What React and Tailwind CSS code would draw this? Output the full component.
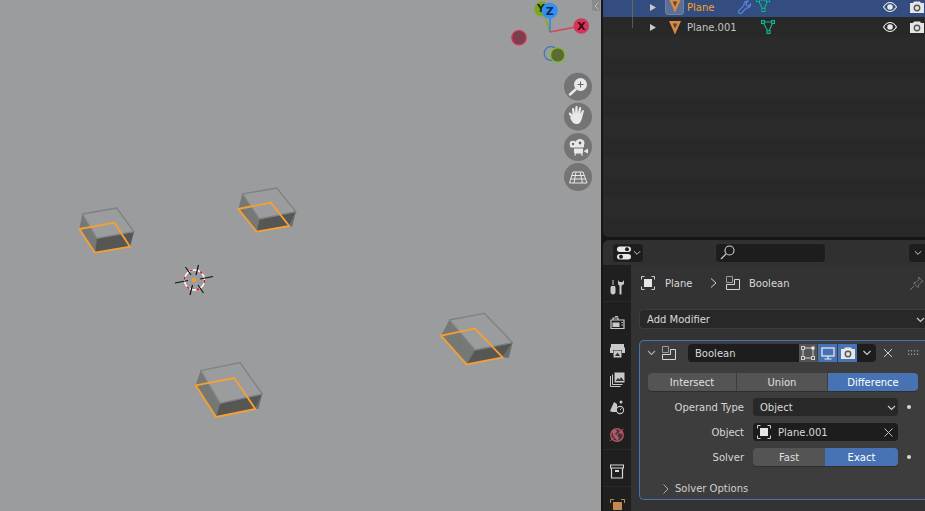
const BOXES = [
  { o: [60, 180], t: [[67,102],[170,84],[222,155],[110,175]], l: [[58,147],[163,128],[210,200],[105,218]] },
  { o: [60, 180], t: [[547,42],[650,24],[708,95],[598,117]], l: [[535,87],[632,68],[688,138],[590,155]] },
  { o: [180, 310], t: [[62,182],[180,158],[247,252],[120,280]], l: [[47,226],[163,204],[226,297],[108,321]] },
  { o: [180, 310], t: [[808,30],[913,10],[998,98],[885,120]], l: [[783,77],[885,56],[968,142],[860,163]] },
];
const pts = (a) => a.map((p) => p.join(",")).join(" ");

function Box({ o, t, l }) {
  return (
    <g transform={`translate(${o[0]} ${o[1]}) scale(0.3333)`} strokeLinejoin="round">
      <polygon points={pts([t[0], t[3], l[3], l[0]])} fill="#767876" />
      <polygon points={pts([t[3], t[2], l[2], l[3]])} fill="#565654" />
      <polygon points={pts([t[2], [t[2][0] - 12, t[2][1] + 45], l[2]])} fill="#6a6b6a" />
      <polygon points={pts(t)} fill="#9b9c9e" stroke="#808182" strokeWidth="4" />
      <line x1={t[3][0]} y1={t[3][1]} x2={l[3][0]} y2={l[3][1]} stroke="#6d6e6d" strokeWidth="2" />
      <polygon points={pts(l)} fill="none" stroke="#f5a035" strokeWidth="5.5" />
    </g>
  );
}

function Cursor() {
  return (
    <g>
      <circle cx="194.500" cy="280" r="10" fill="none" stroke="#fff" strokeWidth="1.400" />
      <circle cx="194.500" cy="280" r="10" fill="none" stroke="#e01010" strokeWidth="1.400" strokeDasharray="3 7.500" />
      <g stroke="#111" strokeWidth="1.100">
        <line x1="175" y1="283" x2="188" y2="280.500" />
        <line x1="200" y1="279" x2="213" y2="276.500" />
        <line x1="185.500" y1="267" x2="191" y2="275" />
        <line x1="198" y1="285" x2="203.500" y2="293" />
        <line x1="198.500" y1="265" x2="196" y2="275" />
        <line x1="192.500" y1="285" x2="190" y2="295" />
      </g>
      <circle cx="194" cy="280" r="2.300" fill="#f29b34" />
    </g>
  );
}

function Gizmo() {
  return (
    <g fontFamily="'DejaVu Sans', sans-serif" fontWeight="700" fontSize="11" textAnchor="middle">
      <line x1="550" y1="32" x2="543" y2="10" stroke="#7fae1c" strokeWidth="1.500" />
      <circle cx="541.700" cy="9" r="7.500" fill="#7aa81c" />
      <text x="541" y="12" fill="#1d2a08">Y</text>
      <line x1="550" y1="32" x2="581" y2="26" stroke="#d9405c" strokeWidth="1.500" />
      <line x1="550" y1="32" x2="550" y2="11" stroke="#2f80e0" strokeWidth="1.500" />
      <circle cx="549.700" cy="10.700" r="8" fill="#2f90f5" />
      <text x="549.700" y="14.700" fill="#0c2a50">Z</text>
      <circle cx="581.300" cy="26" r="7.800" fill="#d7345a" />
      <text x="581.300" y="30" fill="#3b0a18">X</text>
      <circle cx="519" cy="37.700" r="7.200" fill="#7b3e4c" stroke="#d7345a" strokeWidth="1.200" />
      <circle cx="551" cy="53.500" r="6.800" fill="#9b9c9e" stroke="#3d74b8" strokeWidth="1.200" />
      <circle cx="557.700" cy="55" r="7.200" fill="#5c6b36" stroke="#7fc01c" strokeWidth="1.300" />
    </g>
  );
}

function NavButtons() {
  return (
    <g>
      {[86.7, 116.7, 147, 177].map((y) => (
        <circle key={y} cx="578" cy={y} r="14" fill="#747474" />
      ))}
      <g>
        <circle cx="580.500" cy="84.500" r="6.500" fill="#e8e8e8" />
        <path d="M575.500 89.500L570 94.500" stroke="#e8e8e8" strokeWidth="2.500" strokeLinecap="round" />
        <path d="M577.500 84.500h6M580.500 81.500v6" stroke="#666" strokeWidth="1" />
      </g>
      <path d="M571 117c-1.500-2-3-3.500-2-4.300 1-.7 2.500 1 3.500 2.300l-.5-6c0-1.500 2-1.500 2.200 0l.8 4.500.4-6.500c.1-1.500 2.200-1.500 2.200 0l.2 6.300 1.300-5.500c.3-1.400 2.300-1 2.100.4l-1 6 1.800-3.500c.6-1.200 2.300-.6 1.800.7l-1.800 6.500c-.8 3.800-2.500 6.100-5.500 6.100-3 0-4.500-2-6.500-6.500z" fill="#e8e8e8" />
      <g fill="#e8e8e8">
        <circle cx="573" cy="144" r="3.300" />
        <ellipse cx="580" cy="143" rx="4.500" ry="4" />
        <rect x="570" y="144" width="14" height="3.500" rx="1" />
        <rect x="574" y="148.500" width="9" height="5" />
        <path d="M584 151l4-2.500v5l-4-2z" />
        <path d="M575 153.500h1.500l-1 2h-1zM580.500 153.500h1.500l1 2h-1.500z" />
      </g>
      <circle cx="573" cy="144" r="1.200" fill="#666" />
      <circle cx="580" cy="143" r="1.400" fill="#666" />
      <path d="M573 172h10l4 11h-17.500zM576 172l-2 11M580 172l2.500 11M571.800 175.500h12.400M570.500 179h15.500" fill="none" stroke="#e8e8e8" strokeWidth="1" />
    </g>
  );
}

const Chevron = ({ c = "#cfcfcf", w = 9 }) => (
  <svg width={w} height="6" viewBox="0 0 9 6"><path d="M1 1l3.500 3.500L8 1" fill="none" stroke={c} strokeWidth="1.100" /></svg>
);

const MeshData = () => (
  <svg width="16" height="16" viewBox="0 0 16 16" fill="none" stroke="#10b58f" strokeWidth="1.100">
    <path d="M3 3h10L8.500 13.500z" />
    <rect x="1.500" y="1.500" width="3" height="3" fill="#1f3f4f" />
    <rect x="11.500" y="1.500" width="3" height="3" fill="#1f3f4f" />
    <rect x="7" y="11.500" width="3" height="3" fill="#1f3f4f" />
  </svg>
);

const Tri = ({ c = "#d98b45" }) => (
  <svg width="14" height="15" viewBox="0 0 14 15"><path d="M1 1h12L7 14.500z" fill={c} /><path d="M4.800 3.500h4.400L7 8.500z" fill="#52463b" /></svg>
);

const Eye = () => (
  <svg width="14" height="12" viewBox="0 0 14 12"><path d="M.5 6C3 2 5 1.500 7 1.500S11 2 13.500 6C11 10 9 10.500 7 10.500S3 10 .5 6z" fill="none" stroke="#e8e8e8" strokeWidth="1.200" /><circle cx="7" cy="6" r="2.800" fill="#e8e8e8" /></svg>
);

const Cam = () => (
  <svg width="14" height="13" viewBox="0 0 14 13"><path d="M0 2h3l1-1.500h6L11 2h3v10H0z" fill="#e6e6e6" /><circle cx="7" cy="7" r="3.400" fill="#555" /><circle cx="7" cy="7" r="2" fill="#e6e6e6" /></svg>
);

const Arrow = () => (
  <svg width="6" height="7" viewBox="0 0 6 7"><path d="M0 0l6 3.500L0 7z" fill="#c9c9c9" /></svg>
);

function OutlinerRow({ selected, odd, children }) {
  return (
    <div className={`h-5 shrink-0 flex items-center relative ${selected ? "bg-[#334d80]" : odd ? "bg-[#2b2b2b]" : "bg-[#282828]"}`}>
      {children}
    </div>
  );
}

function Outliner() {
  return (
    <div className="h-[238px] -mt-px rounded-bl-md overflow-hidden bg-[#282828] flex flex-col shrink-0">
      <div className="-mt-[2px] flex flex-col">
        <OutlinerRow selected>
          <div className="absolute left-[29px] top-[3px] bottom-0 w-px bg-[#6a6a5a]" />
          <div className="ml-[47px] w-[6px] mr-[9px] flex"><Arrow /></div>
          <div className="w-[19px] h-[19px] -mt-1 rounded-[3px] bg-[#5c6f94] border border-[#6f83a8] flex items-center justify-center"><Tri /></div>
          <span className="ml-[3px] w-[50px] pt-[2px] text-[#f5a623]">Plane</span>
          <svg width="15" height="15" viewBox="0 0 15 15" fill="none" stroke="#5b84d6" strokeWidth="1.200"><path d="M2 13c-1-1-.8-1.800 0-2.600l5-5C6.500 3 8.500.8 11 1.200L9 3.500l.5 2 2 .5 2-2c.4 2.500-1.800 4.500-4.200 4L4.500 13c-.8.800-1.700 1-2.500 0z" /></svg>
          <span className="ml-[3px] -mt-1"><MeshData /></span>
          <div className="ml-auto flex items-center gap-[13px] pr-[1px]"><Eye /><Cam /></div>
        </OutlinerRow>
        <OutlinerRow>
          <div className="absolute left-[29px] top-0 h-[11px] w-px bg-[#5a5a55]" />
          <div className="ml-[47px] w-[6px] mr-[12px] flex"><Arrow /></div>
          <Tri />
          <span className="ml-[5px] w-[73px] pt-[2px] text-[#c4c4c4]">Plane.001</span>
          <MeshData />
          <div className="ml-auto flex items-center gap-[13px] pr-[1px]"><Eye /><Cam /></div>
        </OutlinerRow>
        {Array.from({ length: 10 }, (_, i) => (
          <OutlinerRow key={i} odd={i % 2 === 0} />
        ))}
      </div>
    </div>
  );
}

const TabIcon = ({ children, className = "" }) => (
  <div className={`flex items-center justify-center h-[20px] shrink-0 ${className}`}>{children}</div>
);

function Sidebar() {
  return (
    <div className="w-[28px] shrink-0 bg-[#1f1f1f] flex flex-col items-center pt-[12px]">
      <TabIcon>
        <svg width="15" height="15" viewBox="0 0 15 15" fill="#c8c8c8"><path d="M2.500 0h1v5h-1zM1 6h4l.5 2v4c0 1.500-1 2.500-2.500 2.500S.5 13.500.5 12V8z" /><path d="M8 0v3.500c0 1 .8 1.800 1.500 2.300V14c0 .8 2 .8 2 0V5.800C12.200 5.300 14 4.500 14 3.500V0l-1.500 2h-3z" /></svg>
      </TabIcon>
      <div className="h-px w-full shrink-0 bg-[#2a2a2a] mt-[4px] mb-[10px]" />
      <TabIcon>
        <svg width="15" height="15" viewBox="0 0 15 15" fill="none" stroke="#c8c8c8" strokeWidth="1.200"><path d="M1 5h13v8.500H1zM3 5V3h5v2M5 1.500h3" /><path d="M2.500 7.500h7v4.500h-7z" fill="#c8c8c8" stroke="none" /><path d="M11.500 7.500h1.500M11.500 10h1.500" /></svg>
      </TabIcon>
      <TabIcon className="mt-[8px]">
        <svg width="15" height="15" viewBox="0 0 15 15"><path d="M1 1h13v3l1 1v5h-3V7H3v3H0V5l1-1z" fill="#c8c8c8" /><path d="M3.500 7.500h8v7h-8z" fill="#c8c8c8" /><path d="M5 13l2.500-3.500L10 13z" fill="#333" /></svg>
      </TabIcon>
      <TabIcon className="mt-[9px]">
        <svg width="15" height="15" viewBox="0 0 15 15" fill="none" stroke="#c8c8c8"><path d="M.500 4v10.500h10" /><path d="M2.500 2.500v10h10" /><rect x="4.500" y=".5" width="10" height="10" fill="#c8c8c8" stroke="none" /><path d="M5.500 9l2.500-3 1.500 1.500L11 5l3 4z" fill="#333" stroke="none" /></svg>
      </TabIcon>
      <TabIcon className="mt-[8px]">
        <svg width="15" height="15" viewBox="0 0 15 15"><path d="M0 11L4 2l3 2v8H2z" fill="#c8c8c8" /><circle cx="11" cy="2" r="1.500" fill="#c8c8c8" /><circle cx="10" cy="10" r="3.600" fill="none" stroke="#c8c8c8" strokeWidth="1.100" /><path d="M10 10l1.500-1.500" stroke="#c8c8c8" /></svg>
      </TabIcon>
      <TabIcon className="mt-[8px]">
        <svg width="16" height="16" viewBox="0 0 16 16"><circle cx="8" cy="8" r="6.300" fill="#4a3238" stroke="#b25a68" strokeWidth="1.300" /><path d="M3 4l4-1.500L8 5 5.500 7l2.500 1 2 3-1.500 3-2-2.500L4 8zM10 3l3 2v2l-2-.5z" fill="#b25a68" /><path d="M1 14L14.500 2" stroke="#b25a68" strokeWidth="1" /></svg>
      </TabIcon>
      <div className="h-px w-full shrink-0 bg-[#2a2a2a] mt-[4px] mb-[11px]" />
      <TabIcon>
        <svg width="14" height="15" viewBox="0 0 14 15" fill="none" stroke="#d8d8d8" strokeWidth="1.200"><path d="M.5 1h13v3H.5zM1.500 4v10h11V4" /><path d="M5 7h4" strokeWidth="2" /></svg>
      </TabIcon>
      <div className="h-px w-full shrink-0 bg-[#2a2a2a] mt-[5px] mb-[12px]" />
      <div className="h-[11px] shrink-0 overflow-hidden">
        <svg width="15" height="16" viewBox="0 0 15 16"><path d="M.5 4V.5H4M11 .5h3.500V4" fill="none" stroke="#c08a55" strokeWidth="1" /><rect x="3" y="3" width="9" height="12" fill="#c8874e" /></svg>
      </div>
    </div>
  );
}

const ObjIcon = ({ size = 14 }) => (
  <svg width={size} height={size} viewBox="0 0 14 14" fill="none" stroke="#cfcfcf" strokeWidth="1"><path d="M.500 3.500v-3h3M10.500.5h3v3M13.500 10.500v3h-3M3.500 13.500h-3v-3" /><rect x="3" y="3" width="8" height="8" fill="#e6e6e6" stroke="none" /></svg>
);
const BoolIcon = () => (
  <svg width="14" height="14" viewBox="0 0 14 14" fill="none" stroke="#d8d8d8" strokeWidth="1"><path d="M.500.500h6v6h-6z" stroke="#9a9a9a" /><path d="M8.500 3.500h5v10h-13v-5h8z" /></svg>
);

function SegButton({ active, className = "", children }) {
  return (
    <div className={`h-full flex items-center justify-center pt-[2px] ${active ? "bg-[#4772b3] text-white" : "bg-[#545454] text-[#e0e0e0]"} ${className}`}>{children}</div>
  );
}

function PropRow({ label, dot, children, className = "" }) {
  return (
    <div className={`flex items-center h-[18px] ${className}`}>
      <span className="w-[104px] shrink-0 text-right text-[#d6d6d6] pt-[2px]">{label}</span>
      <div className="ml-[9px] w-[145px] h-full">{children}</div>
      {dot && <span className="ml-[9px] w-[4px] h-[4px] rounded-full bg-[#d8d8d8]" />}
    </div>
  );
}

function Properties() {
  return (
    <div className="flex-1 min-h-0 mt-[3px] rounded-tl-md overflow-hidden flex flex-col">
      <div className="h-[25px] shrink-0 bg-[#303030] relative flex items-center">
        <div className="ml-[9px] w-[32px] h-[20px] rounded-[4px] bg-[#1d1d1d] border border-[#333] flex items-center pl-[3px] gap-[1px]">
          <svg width="16" height="14" viewBox="0 0 16 14"><rect x="1" y=".5" width="14" height="5.500" rx="2.700" fill="#e8e8e8" /><rect x="1" y="8" width="14" height="5.500" rx="2.700" fill="#e8e8e8" /><circle cx="11" cy="3.200" r="2" fill="#1d1d1d" /><circle cx="5" cy="10.800" r="2" fill="#1d1d1d" /></svg>
          <Chevron w={8} />
        </div>
        <div className="ml-[71px] w-[111px] h-[20px] rounded-[4px] bg-[#1d1d1d] border border-[#333] flex items-center pl-[4px]">
          <svg width="15" height="15" viewBox="0 0 15 15" fill="none" stroke="#cfcfcf" strokeWidth="1.100"><circle cx="9.500" cy="5.500" r="4.500" /><path d="M6 9l-5 5" /></svg>
        </div>
        <div className="ml-auto w-[20px] h-[20px] -mr-[3px] rounded-l-[4px] bg-[#1d1d1d] border border-[#333] flex items-center pl-[5px]"><Chevron w={8} /></div>
      </div>
      <div className="flex-1 min-h-0 flex">
        <Sidebar />
        <div className="flex-1 min-w-0 bg-[#333333] pl-[8px] flex flex-col">
          <div className="h-[44px] shrink-0 flex items-center pb-[8px] text-[#d9d9d9]">
            <span className="ml-[2px] flex"><ObjIcon /></span>
            <span className="ml-[10px] w-[27px] pt-[2px]">Plane</span>
            <svg className="ml-[18px]" width="7" height="10" viewBox="0 0 7 10" fill="none" stroke="#cfcfcf" strokeWidth="1"><path d="M1 .5L6 5 1 9.500" /></svg>
            <span className="ml-[9px] flex"><BoolIcon /></span>
            <span className="ml-[9px] pt-[2px]">Boolean</span>
            <svg className="ml-auto mr-[1px]" width="15" height="15" viewBox="0 0 15 15" fill="none" stroke="#777" strokeWidth="1"><path d="M9.500 1L14 5.500l-1.500 .5-3 3 -.5 2.500-4.500-4.500 2.500-.5 3-3zM5 10l-4 4" /></svg>
          </div>
          <div className="h-[20px] shrink-0 -mr-[4px] rounded-[4px] bg-[#282828] border border-[#3d3d3d] flex items-center pl-[7px] pr-[3px] pt-[2px] text-[#d9d9d9] w-[290px]">
            Add Modifier
            <span className="ml-auto flex"><Chevron /></span>
          </div>
          <div className="mt-[11px] h-[160px] shrink-0 w-[292px] rounded-l-[5px] border border-[#4772b3] border-r-0 bg-[#3d3d3d] flex flex-col">
            <div className="h-[20px] mt-[2px] shrink-0 flex items-center">
              <span className="ml-[7px] flex"><Chevron c="#aaa" w={9} /></span>
              <span className="ml-[6px] flex"><BoolIcon /></span>
              <div className="ml-[12px] w-[188px] h-[18px] rounded-[4px] bg-[#1d1d1d] flex items-stretch overflow-hidden">
                <span className="w-[111px] pl-[7px] pt-[2px] flex items-center text-[#d9d9d9]">Boolean</span>
                <span className="w-[19px] bg-[#545454] flex items-center justify-center border-r border-[#3d3d3d]">
                  <svg width="14" height="14" viewBox="0 0 14 14" fill="none" stroke="#cfcfcf"><path d="M2 2h10v10H2z" strokeWidth="1" /><rect x=".5" y=".5" width="3" height="3" fill="#545454" /><rect x="10.500" y=".5" width="3" height="3" fill="#eee" stroke="none" /><rect x=".5" y="10.500" width="3" height="3" fill="#545454" /><rect x="10.500" y="10.500" width="3" height="3" fill="#545454" /></svg>
                </span>
                <span className="w-[20px] bg-[#4772b3] flex items-center justify-center border-r border-[#3d3d3d]">
                  <svg width="14" height="13" viewBox="0 0 14 13" fill="none" stroke="#eee" strokeWidth="1.200"><rect x="1" y="1" width="12" height="8" /><path d="M7 9v2.500M3.500 12h7" /></svg>
                </span>
                <span className="w-[19px] bg-[#4772b3] flex items-center justify-center">
                  <Cam />
                </span>
                <span className="flex-1 flex items-center justify-center"><Chevron w={10} /></span>
              </div>
              <svg className="ml-[7px]" width="10" height="10" viewBox="0 0 10 10" stroke="#d0d0d0" strokeWidth="1"><path d="M1 1l8 8M9 1l-8 8" /></svg>
              <svg className="ml-[15px]" width="11" height="6" viewBox="0 0 11 6" fill="#9a9a9a"><rect x="0" y="0" width="1.200" height="1.500" /><rect x="3" y="0" width="1.200" height="1.500" /><rect x="6" y="0" width="1.200" height="1.500" /><rect x="9" y="0" width="1.200" height="1.500" /><rect x="0" y="3.500" width="1.200" height="1.500" /><rect x="3" y="3.500" width="1.200" height="1.500" /><rect x="6" y="3.500" width="1.200" height="1.500" /><rect x="9" y="3.500" width="1.200" height="1.500" /></svg>
            </div>
            <div className="mt-[10px] ml-[8px] w-[270px] h-[18px] shrink-0 rounded-[4px] overflow-hidden flex gap-px shadow-[0_1px_0_#2e2e2e]">
              <SegButton className="w-[88px]">Intersect</SegButton>
              <SegButton className="w-[90px]">Union</SegButton>
              <SegButton active className="flex-1">Difference</SegButton>
            </div>
            <PropRow label="Operand Type" dot className="mt-[7px]">
              <div className="h-full rounded-[4px] bg-[#282828] flex items-center pl-[7px] pr-[2px] pt-[2px] text-[#d9d9d9]">
                Object<span className="ml-auto flex"><Chevron /></span>
              </div>
            </PropRow>
            <PropRow label="Object" className="mt-[7px]">
              <div className="h-full rounded-[4px] bg-[#1d1d1d] flex items-center pl-[4px] pr-[5px] text-[#d9d9d9]">
                <ObjIcon />
                <span className="ml-[7px] pt-[2px]">Plane.001</span>
                <svg className="ml-auto" width="9" height="9" viewBox="0 0 9 9" stroke="#c0c0c0"><path d="M.5.5l8 8M8.500.5l-8 8" /></svg>
              </div>
            </PropRow>
            <PropRow label="Solver" dot className="mt-[7px]">
              <div className="h-full rounded-[4px] overflow-hidden flex shadow-[0_1px_0_#2e2e2e]">
                <SegButton className="w-[72px]">Fast</SegButton>
                <SegButton active className="flex-1">Exact</SegButton>
              </div>
            </PropRow>
            <div className="mt-[13px] flex items-center text-[#d0d0d0] h-[18px] pt-[2px]">
              <svg className="ml-[23px]" width="6" height="10" viewBox="0 0 6 10" fill="none" stroke="#aaa" strokeWidth="1"><path d="M.5.5L5 5 .5 9.500" /></svg>
              <span className="ml-[6px]">Solver Options</span>
            </div>
          </div>
        </div>
      </div>
    </div>
  );
}

export default function App() {
  return (
    <div className="w-[925px] h-[511px] overflow-hidden flex bg-[#161616] text-[10px] leading-none" style={{ fontFamily: "'DejaVu Sans', sans-serif" }}>
      <div className="w-[601px] shrink-0 h-full relative bg-[#9b9c9e]">
        <svg className="absolute inset-0" width="601" height="511" viewBox="0 0 601 511">
          {BOXES.map((b, i) => <Box key={i} {...b} />)}
          <Cursor />
          <Gizmo />
          <NavButtons />
        </svg>
        <div className="absolute right-[1px] top-0 w-[8px] h-[11px] rounded-bl-[3px] bg-[#8a8a8a] flex items-center justify-center">
          <svg width="5" height="8" viewBox="0 0 5 8" fill="none" stroke="#bdbdbd" strokeWidth="1"><path d="M4.500.500L1 4l3.500 3.500" /></svg>
        </div>
      </div>
      <div className="flex-1 min-w-0 ml-[2px] flex flex-col">
        <Outliner />
        <Properties />
      </div>
    </div>
  );
}
